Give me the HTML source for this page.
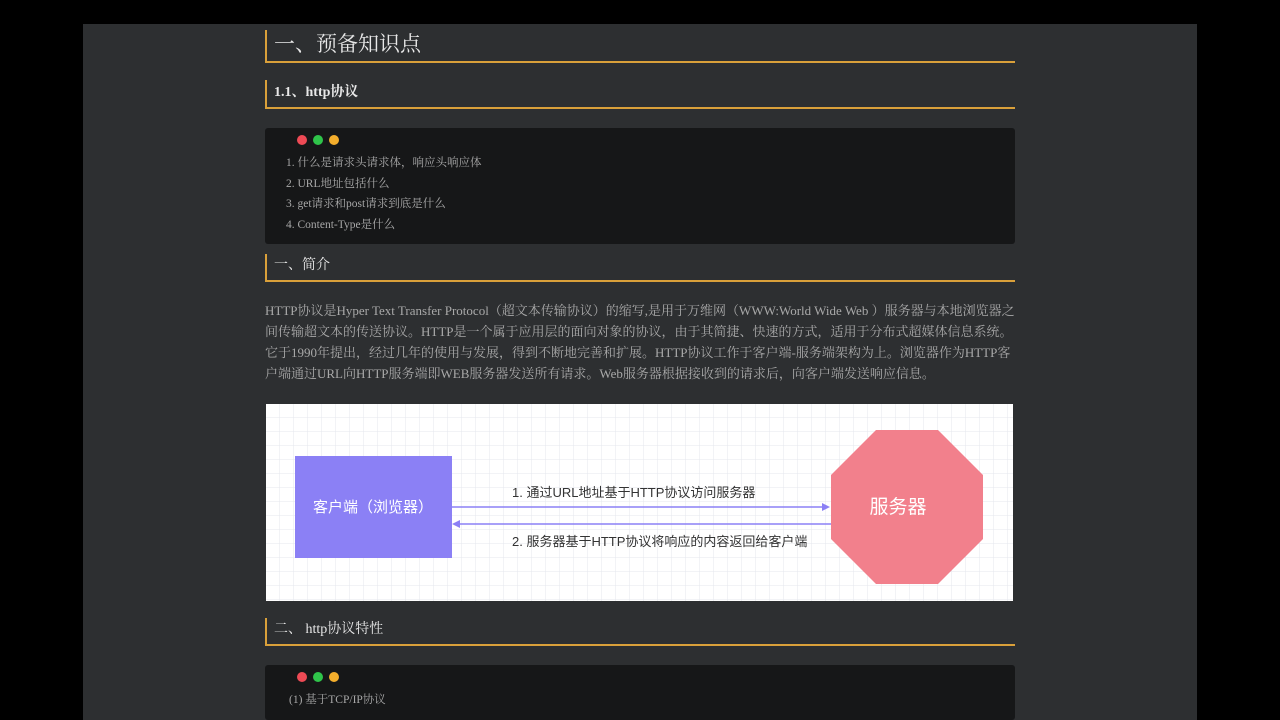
<!DOCTYPE html><html><head><meta charset="utf-8"><style>
html,body{margin:0;background:#000;width:1280px;height:720px;overflow:hidden;font-family:"Liberation Serif","Noto Serif CJK SC",serif;}
.panel{position:absolute;left:83px;top:24px;width:1114px;height:696px;background:#2d2f31;}
.h{position:absolute;left:265px;width:750px;border-left:2px solid #d9a03a;border-bottom:2px solid #d9a03a;color:#e8e8e8;box-sizing:border-box;padding-left:7px;}
.code{position:absolute;left:265px;width:750px;background:#161718;border-radius:3px;color:#a8a8a8;font-size:11.5px;}
.dots{position:absolute;left:32px;top:7px}
.dots i{display:inline-block;width:10px;height:10px;border-radius:50%;margin-right:6px}
p{position:absolute;left:265px;top:300px;width:752px;margin:0;color:#a9a9a9;font-size:13px;line-height:21px;}
</style></head><body>
<div class="panel"></div>
<div class="h" style="top:30px;height:33px;font-size:21px;line-height:28px">一、预备知识点</div>
<div class="h" style="top:80px;height:29px;font-size:14px;font-weight:bold;line-height:25px">1.1、http协议</div>
<div class="code" style="top:128px;height:116px">
<div class="dots"><i style="background:#ee4a55"></i><i style="background:#2fc44a"></i><i style="background:#f4ae2c"></i></div>
<div style="position:absolute;left:21px;top:25px;line-height:20.7px">1. 什么是请求头请求体，响应头响应体<br>2. URL地址包括什么<br>3. get请求和post请求到底是什么<br>4. Content-Type是什么</div></div>
<div class="h" style="top:254px;height:28px;font-size:14px;line-height:24px">一、简介</div>
<p>HTTP协议是Hyper Text Transfer Protocol（超文本传输协议）的缩写,是用于万维网（WWW:World Wide Web ）服务器与本地浏览器之间传输超文本的传送协议。HTTP是一个属于应用层的面向对象的协议，由于其简捷、快速的方式，适用于分布式超媒体信息系统。它于1990年提出，经过几年的使用与发展，得到不断地完善和扩展。HTTP协议工作于客户端-服务端架构为上。浏览器作为HTTP客户端通过URL向HTTP服务端即WEB服务器发送所有请求。Web服务器根据接收到的请求后，向客户端发送响应信息。</p>
<svg style="position:absolute;left:266px;top:404px" width="747" height="197">
<defs><pattern id="g" width="14" height="14" patternUnits="userSpaceOnUse"><path d="M14 0V14H0" fill="none" stroke="#e4e7ee" stroke-width="1"/></pattern></defs>
<rect width="747" height="197" fill="#fff"/><rect width="747" height="197" fill="url(#g)"/>
<rect x="29" y="52" width="157" height="102" fill="#8b80f5"/>
<text x="107" y="108" fill="#fff" font-size="15" text-anchor="middle" font-family="Liberation Sans,Noto Sans CJK SC,sans-serif">客户端（浏览器）</text>
<polygon points="610,26 672,26 717,71 717,135 672,180 610,180 565,135 565,71" fill="#f2808c"/>
<text x="632" y="109" fill="#fff" font-size="19" text-anchor="middle" font-family="Liberation Sans,Noto Sans CJK SC,sans-serif">服务器</text>
<line x1="186" y1="103" x2="560" y2="103" stroke="#8b80f5" stroke-width="1.5"/><polygon points="564,103 556,99 556,107" fill="#8b80f5"/>
<line x1="190" y1="120" x2="565" y2="120" stroke="#8b80f5" stroke-width="1.5"/><polygon points="186,120 194,116 194,124" fill="#8b80f5"/>
<text x="246" y="93" fill="#333" font-size="13" font-family="Liberation Sans,Noto Sans CJK SC,sans-serif">1. 通过URL地址基于HTTP协议访问服务器</text>
<text x="246" y="142" fill="#333" font-size="13" font-family="Liberation Sans,Noto Sans CJK SC,sans-serif">2. 服务器基于HTTP协议将响应的内容返回给客户端</text>
</svg>
<div class="h" style="top:618px;height:28px;font-size:14px;line-height:24px">二、 http协议特性</div>
<div class="code" style="top:665px;height:55px">
<div class="dots"><i style="background:#ee4a55"></i><i style="background:#2fc44a"></i><i style="background:#f4ae2c"></i></div>
<div style="position:absolute;left:24px;top:26px">(1) 基于TCP/IP协议</div></div>
</body></html>
